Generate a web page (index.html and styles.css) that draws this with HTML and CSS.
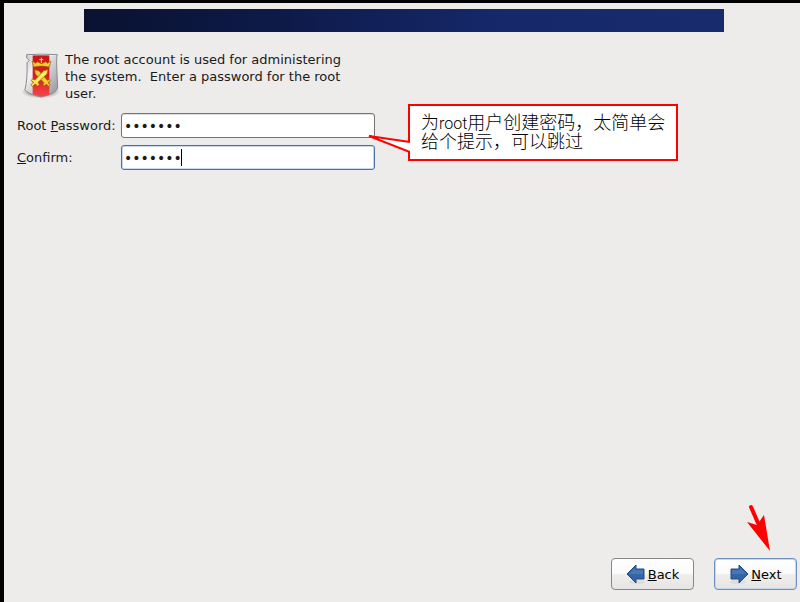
FILE: index.html
```html
<!DOCTYPE html>
<html lang="en">
<head>
    <meta charset="UTF-8">
    <meta name="viewport" content="width=device-width, initial-scale=1.0">
    <title>Root Password</title>
    <link rel="stylesheet" href="styles.css">
</head>
<body>
    <div class="installer">
        <div class="banner"></div>

        <form class="content">
            <!-- Intro -->
            <div class="intro">
                <svg class="shield" viewBox="36 24 114 138" aria-hidden="true">
                    <defs>
                        <linearGradient id="silver" x1="0" y1="0" x2="1" y2="1">
                            <stop offset="0" stop-color="#c4c4c8"/>
                            <stop offset="0.3" stop-color="#f4f4f6"/>
                            <stop offset="0.6" stop-color="#c8c8cc"/>
                            <stop offset="1" stop-color="#909096"/>
                        </linearGradient>
                        <linearGradient id="red" x1="0" y1="0" x2="0" y2="1">
                            <stop offset="0" stop-color="#c8141a"/>
                            <stop offset="0.5" stop-color="#e01a20"/>
                            <stop offset="1" stop-color="#f0484a"/>
                        </linearGradient>
                        <radialGradient id="shade">
                            <stop offset="0.5" stop-color="#777" stop-opacity="0.7"/>
                            <stop offset="1" stop-color="#777" stop-opacity="0"/>
                        </radialGradient>
                    </defs>
                    <ellipse cx="92" cy="140" rx="58" ry="20" fill="url(#shade)"/>
                    <path d="M50 29Q94 26 142 29Q139 36 140 62L143 130Q138 145 93 156Q52 147 45 134Q53 100 51 53L58 46L50 39Z" fill="url(#silver)" stroke="#8a8a8f" stroke-width="3"/>
                    <path d="M68 30H118V149Q106 153 93 155Q80 152 68 148Z" fill="url(#red)"/>
                    <path d="M53 32Q94 29 138 32" fill="none" stroke="#fff" stroke-width="2" opacity="0.6"/>
                    <path d="M66 48L77 55L82 50L94 56L108 50L112 55L123 48L118 66Q94 60 71 66Z" fill="#f6cf28" stroke="#9a6508" stroke-width="2"/>
                    <path d="M94 38V54M88 44H100" stroke="#ffdf38" stroke-width="3"/>
                    <!-- Crossed swords -->
                    <g stroke="#8f6708" stroke-width="2" stroke-linejoin="round">
                        <path d="M74 74L87 78L112 106L119 103L121 108L114 113L121 119L116 124L109 117L103 123L99 119L102 113L76 87Z" fill="#f0ce30"/>
                        <path d="M114 74L101 77L75 105L67 102L64 107L71 112L62 119L67 124L76 117L83 123L88 119L84 112L111 87Z" fill="#ffe850"/>
                    </g>
                    <path d="M109 79L79 109" stroke="#fffbc0" stroke-width="3"/>
                </svg>
                <p class="intro-text">The root account is used for administering the system.&nbsp; Enter a password for the root user.</p>
            </div>

            <!-- Password fields -->
            <div class="fields">
                <label for="password">Root <u>P</u>assword:</label>
                <div class="field">
                    <input type="password" id="password" value="1234567">
                    <div class="callout" lang="zh-CN">
                        <svg class="callout-tail" viewBox="0 0 42 20" aria-hidden="true">
                            <path d="M42 8L1 2L42 18" fill="#fff" stroke="#f00" stroke-width="2"/>
                        </svg>
                        为<span class="latin">root</span>用户创建密码，太简单会<br>给个提示，可以跳过
                    </div>
                </div>
                <label for="confirm"><u>C</u>onfirm:</label>
                <div class="field">
                    <input type="password" id="confirm" class="focused" value="1234567">
                    <span class="caret"></span>
                </div>
            </div>
        </form>

        <!-- Navigation -->
        <div class="actions">
            <button type="button" class="btn">
                <svg class="arrow" viewBox="0 0 20 20" aria-hidden="true">
                    <ellipse cx="11" cy="18" rx="8" ry="2" fill="#ddd"/>
                    <path d="M1 10L10 1V5H18V15H10V19Z" fill="#3465a4" stroke="#204a87"/>
                    <path d="M3 10L9 4V6H17V10Z" fill="#5d8ac2" opacity="0.5"/>
                </svg>
                <span><u>B</u>ack</span>
            </button>
            <button type="button" class="btn btn-default">
                <svg class="arrow" viewBox="0 0 20 20" aria-hidden="true">
                    <ellipse cx="9" cy="18" rx="8" ry="2" fill="#ddd"/>
                    <path d="M19 10L10 1V5H2V15H10V19Z" fill="#3465a4" stroke="#204a87"/>
                    <path d="M17 10L11 4V6H3V10Z" fill="#5d8ac2" opacity="0.5"/>
                </svg>
                <span><u>N</u>ext</span>
            </button>
            <svg class="pointer" viewBox="0 0 24 48" aria-hidden="true">
                <path d="M4 4L11 20" stroke="#f00" stroke-width="4" stroke-linecap="round"/>
                <path d="M0 19L10 22L17 12L23 48Z" fill="#f00"/>
            </svg>
        </div>
    </div>
</body>
</html>
```
FILE: styles.css
```css
* {
    margin: 0;
    padding: 0;
    box-sizing: border-box;
}

body {
    background-color: #000;
    color: #1a1a1a;
    font-family: "DejaVu Sans", sans-serif;
    font-size: 13px;
    line-height: 17px;
    padding: 3px 0 0 4px;
}

.installer {
    display: flex;
    flex-direction: column;
    min-height: calc(100vh - 3px);
    padding-top: 6px;
    background-color: #edecea;
}

.banner {
    height: 23px;
    margin: 0 76px 0 80px;
    background: linear-gradient(to right, #0a1230, #0d1a48 30%, #16286a 65%, #182b6c);
}

.content {
    flex: 1;
    padding: 19px 13px;
}

/* Intro */
.intro {
    display: flex;
    gap: 5px;
    padding-left: 5px;
}

.shield {
    flex: none;
    width: 38px;
    height: 46px;
    margin-top: 2px;
}

.intro-text {
    max-width: 290px;
}

/* Password fields */
.fields {
    display: grid;
    grid-template-columns: 98px 254px;
    gap: 7px 6px;
    align-items: center;
    margin-top: 11px;
}

.fields label {
    white-space: nowrap;
}

.field {
    position: relative;
}

.field input {
    display: block;
    width: 100%;
    height: 25px;
    padding: 0 2px;
    border: 1px solid #77736f;
    border-radius: 3px;
    background-color: #fff;
    box-shadow: inset 0 1px 1px #ddd;
    color: #1a1a1a;
    font-family: "DejaVu Sans", sans-serif;
    font-size: 14px;
    outline: none;
}

.field .focused {
    border-color: #4a6fa5;
    box-shadow: inset 0 0 0 1px #c8daf0;
}

.caret {
    position: absolute;
    top: 4px;
    left: 60px;
    width: 1px;
    height: 17px;
    background-color: #000;
}

/* Callout */
.callout {
    position: absolute;
    top: -9px;
    left: 287px;
    z-index: 1;
    width: 270px;
    padding: 6px 11px 9px;
    border: 2px solid #f00;
    background-color: #fff;
    color: #000;
    font-family: "Noto Sans CJK SC", sans-serif;
    font-size: 18px;
    font-weight: 300;
    line-height: 19px;
    white-space: nowrap;
}

.callout .latin {
    font-family: Roboto, "Liberation Sans", sans-serif;
    font-size: 16px;
    line-height: 1px;
}

.callout-tail {
    position: absolute;
    top: 28px;
    left: -42px;
    width: 42px;
    height: 20px;
}

/* Navigation */
.actions {
    position: relative;
    display: flex;
    justify-content: flex-end;
    gap: 20px;
    padding: 0 3px 12px;
}

.btn {
    display: flex;
    align-items: center;
    justify-content: center;
    gap: 2px;
    width: 83px;
    height: 32px;
    border: 1px solid #8a8783;
    border-radius: 4px;
    background: linear-gradient(#fff, #fafafa 50%, #efeeed 52%, #e6e5e3);
    color: #000;
    font: inherit;
}

.btn-default {
    border-color: #6d8fbd;
    box-shadow: inset 0 0 0 1px #c8d8ec;
}

.arrow {
    width: 20px;
    height: 20px;
}

.pointer {
    position: absolute;
    right: 29px;
    bottom: 51px;
    width: 24px;
    height: 48px;
}
```
